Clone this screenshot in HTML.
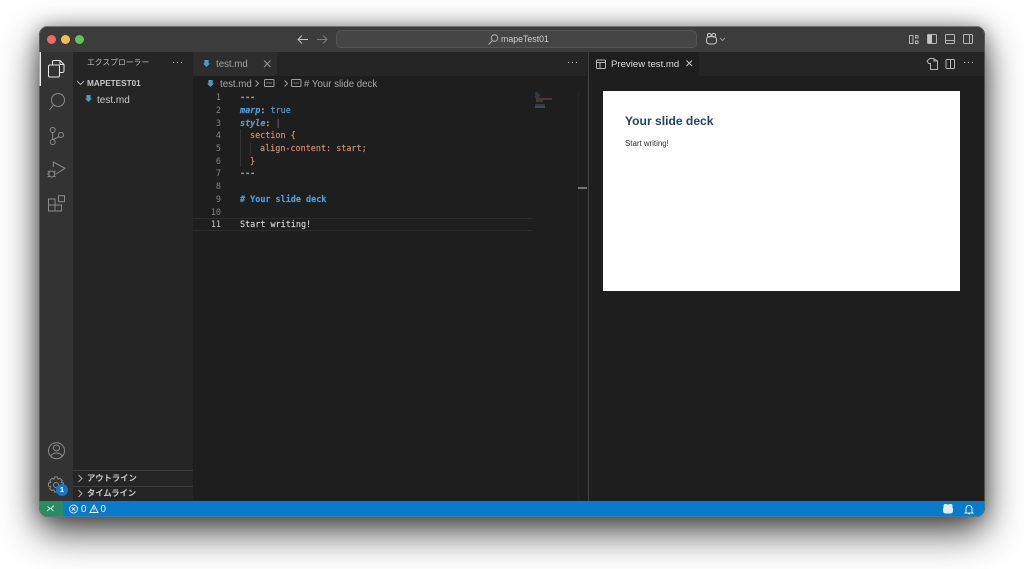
<!DOCTYPE html>
<html><head><meta charset="utf-8"><style>
html,body{margin:0;padding:0;width:1024px;height:569px;overflow:hidden;background:#fff}
body{font-family:"Liberation Sans","Noto Sans CJK JP",sans-serif;position:relative}
.a{position:absolute;white-space:nowrap}
#w{position:absolute;left:39px;top:26px;width:946px;height:491px;border-radius:9px;overflow:hidden;background:#1e1e1e;filter:blur(.25px)}
#s{position:absolute;left:39px;top:26px;width:946px;height:491px;border-radius:9px;box-shadow:0 15px 38px rgba(0,0,0,.72),0 0 18px rgba(0,0,0,.3)}
#o{position:absolute;left:39px;top:26px;width:946px;height:491px;border-radius:9px;box-sizing:border-box;border:1px solid rgba(120,120,120,.55)}
svg{position:absolute;overflow:visible;fill:none;stroke-width:1}
.m{font-family:"DejaVu Sans Mono","Liberation Mono",monospace;font-size:8.45px;line-height:13px;color:#d4d4d4;-webkit-text-stroke:.15px currentColor}
.n{font-family:"DejaVu Sans Mono","Liberation Mono",monospace;font-size:8.45px;line-height:13px;color:#858585;width:28px;text-align:right;left:193px}
</style></head><body>
<div id="s"></div>
<div id="w">
<!-- title bar -->
<div class="a" style="left:0;top:0;width:946px;height:26px;background:#3c3c3c;border-top:1px solid #6a6a6a;box-sizing:border-box"></div>
<div class="a" style="left:8px;top:9px;width:9px;height:9px;border-radius:50%;background:#ed6a5e"></div>
<div class="a" style="left:22px;top:9px;width:9px;height:9px;border-radius:50%;background:#f4bf4f"></div>
<div class="a" style="left:36px;top:9px;width:9px;height:9px;border-radius:50%;background:#61c554"></div>
<svg style="left:0;top:0" width="946" height="26" stroke="#c5c5c5">
<path d="M259 13.500h10M263 9.500l-4 4 4 4"/>
<path stroke="#7c7c7c" d="M278 13.500h10M284 9.500l4 4-4 4"/>
<g stroke="#c5c5c5"><rect x="667.500" y="10.500" width="10" height="7.500" rx="3"/><rect x="668.500" y="7.500" width="3.500" height="3.500" rx="1.500"/><rect x="673" y="7.500" width="3.500" height="3.500" rx="1.500"/></g>
<path stroke="#999" d="M681 12l2.500 2.500 2.500-2.500"/>
<g stroke="#b5b5b5"><rect x="870.500" y="9.500" width="3.500" height="8"/><rect x="876.500" y="9.500" width="2.500" height="2.500"/><rect x="876.500" y="15" width="2.500" height="2.500"/>
<rect x="888.500" y="8.500" width="9" height="9" rx="1"/><rect x="906.500" y="8.500" width="9" height="9" rx="1"/><path d="M906.500 14.500h9"/><rect x="924.500" y="8.500" width="9" height="9" rx="1"/><path d="M930.500 8.500v9"/></g>
<rect x="889" y="9" width="4" height="8" fill="#c5c5c5" stroke="none"/>
</svg>
<div class="a" style="left:297px;top:4px;width:361px;height:18px;box-sizing:border-box;background:#454545;border:1px solid #555;border-radius:5px"></div>
<svg style="left:0;top:0" width="946" height="26" stroke="#b0b0b0"><circle cx="455.500" cy="12" r="3.300"/><path d="M453 15l-3.500 3.500"/></svg>
<div class="a" style="left:462px;top:7px;font-size:8.800px;line-height:12px;color:#cfcfcf">mapeTest01</div>

<!-- activity bar -->
<div class="a" style="left:0;top:26px;width:34px;height:449px;background:#333"></div>
<div class="a" style="left:0;top:26px;width:1.500px;height:34px;background:#e8e8e8"></div>
<svg style="left:0;top:26px" width="34" height="449" stroke="#e6e6e6" stroke-width="1.100">
<rect x="9.500" y="13" width="11" height="12" rx="1.500"/><path d="M13.500 13v-3a1.500 1.500 0 0 1 1.500-1.500h6l4 4V19a1.500 1.500 0 0 1-1.500 1.500h-3M21 8.500v4h4"/>
<g stroke="#8c8c8c"><circle cx="19" cy="48" r="6.500"/><path d="M14.500 53l-4 5"/>
<circle cx="13.700" cy="78" r="2.500"/><circle cx="13.700" cy="90" r="2.500"/><circle cx="22" cy="83" r="2.500"/><path d="M13.700 80.500v7M19.800 84.500c-2 2-4.500 1.800-6 3.500"/>
<path d="M14.300 115v-5l11.700 6.300-9 5.700"/><circle cx="12.700" cy="122" r="3"/><path d="M8.700 119l2 1M8.700 125l2-1M16.700 119l-2 1M16.700 125l-2-1M8.200 122h1.500M15.700 122h1"/>
<rect x="9.500" y="147" width="6.500" height="6"/><rect x="9.500" y="153" width="6.500" height="6"/><rect x="16" y="153" width="6.500" height="6"/><rect x="19.500" y="143.700" width="6" height="6"/>
<circle cx="17.500" cy="398.700" r="8"/><circle cx="17.500" cy="396" r="3"/><path d="M11.500 404.500c1.500-3 3.500-3.500 6-3.500s4.500.5 6 3.500"/>
<circle cx="17" cy="433" r="2.500"/><path d="M15.500 425h3l.5 2.200 2-.9 2.200 2.200-.9 2 2.200.5v3l-2.200.5.9 2-2.200 2.200-2-.9-.5 2.200h-3l-.5-2.200-2 .9-2.200-2.200.9-2-2.200-.5v-3l2.200-.5-.9-2 2.200-2.200 2 .9z"/></g>
</svg>
<div class="a" style="left:17px;top:458px;width:12px;height:12px;border-radius:50%;background:#0e78cf;color:#fff;font-size:7.500px;font-weight:bold;line-height:12px;text-align:center">1</div>

<!-- sidebar -->
<div class="a" style="left:34px;top:26px;width:120px;height:449px;background:#252526"></div>
<div class="a" style="left:48px;top:31px;font-size:7.800px;line-height:12px;color:#bbb">エクスプローラー</div>
<div class="a" style="left:133px;top:29px;font-size:10px;line-height:16px;color:#c5c5c5;letter-spacing:.6px">···</div>
<svg style="left:34px;top:50px" width="120" height="14" stroke="#aaa"><path d="M4 5l3.500 3.500L11 5"/></svg>
<div class="a" style="left:48px;top:52px;font-size:8.200px;line-height:12px;font-weight:bold;color:#c8c8c8">MAPETEST01</div>
<div class="a" style="left:46px;top:69px;width:7px;height:7px;background:#519aba;clip-path:polygon(20% 0,80% 0,80% 50%,100% 50%,50% 100%,0 50%,20% 50%)"></div>
<div class="a" style="left:58px;top:68px;font-size:10px;line-height:13px;color:#ccc">test.md</div>
<div class="a" style="left:34px;top:444px;width:120px;height:1px;background:#3e3e3e"></div>
<div class="a" style="left:34px;top:460px;width:120px;height:1px;background:#3e3e3e"></div>
<svg style="left:34px;top:446px" width="20" height="30" stroke="#aaa"><path d="M5.500 3l3.500 3.500L5.500 10M5.500 18l3.500 3.500L5.500 25"/></svg>
<div class="a" style="left:48px;top:446px;font-size:8.300px;line-height:12px;font-weight:bold;color:#c8c8c8">アウトライン</div>
<div class="a" style="left:48px;top:461px;font-size:8.300px;line-height:12px;font-weight:bold;color:#c8c8c8">タイムライン</div>

<!-- editor tabs -->
<div class="a" style="left:154px;top:26px;width:394px;height:24px;background:#252526"></div>
<div class="a" style="left:154px;top:26px;width:84px;height:24px;background:#2d2d2d"></div>
<div class="a" style="left:164px;top:34px;width:7px;height:7px;background:#519aba;clip-path:polygon(20% 0,80% 0,80% 50%,100% 50%,50% 100%,0 50%,20% 50%)"></div>
<div class="a" style="left:177px;top:32px;font-size:9.700px;line-height:13px;color:#a0a0a0">test.md</div>
<svg style="left:224px;top:33px" width="10" height="10" stroke="#999"><path d="M1 1.500l6.500 6.500M7.500 1.500L1 8"/></svg>
<div class="a" style="left:528px;top:29px;font-size:10px;line-height:16px;color:#c5c5c5;letter-spacing:.6px">···</div>
<!-- breadcrumbs -->
<div class="a" style="left:168px;top:54px;width:7px;height:7px;background:#519aba;clip-path:polygon(20% 0,80% 0,80% 50%,100% 50%,50% 100%,0 50%,20% 50%)"></div>
<div class="a" style="left:181px;top:52px;font-size:9.700px;line-height:13px;color:#a8a8a8">test.md</div>
<svg style="left:154px;top:50px" width="150" height="16" stroke="#a0a0a0"><path d="M62.500 4.500l3 3-3 3M91.500 4.500l3 3-3 3"/><rect x="71.500" y="3.500" width="9.500" height="7" rx="1"/><rect x="98.500" y="3.500" width="9.500" height="7" rx="1"/><path d="M73.500 7h5.500M100.500 7h5.500" stroke-dasharray="1.300 .7"/></svg>
<div class="a" style="left:265px;top:52px;font-size:9.700px;line-height:13px;color:#a8a8a8"># Your slide deck</div>

<!-- code -->
<div class="a" style="left:154px;top:192px;width:339px;height:11px;border-top:1px solid #2d2d2d;border-bottom:1px solid #2d2d2d"></div>
<div class="a" style="left:200.500px;top:103px;width:1px;height:38px;background:#333"></div>
<div class="a" style="left:210.500px;top:116px;width:1px;height:13px;background:#333"></div>
<div class="a" style="left:0;top:0;transform:translate(-39px,-26px);width:1024px;height:569px">
<div class="a n" style="top:91px">1</div><div class="a n" style="top:104px">2</div><div class="a n" style="top:117px">3</div><div class="a n" style="top:129px">4</div><div class="a n" style="top:142px">5</div><div class="a n" style="top:155px">6</div><div class="a n" style="top:167px">7</div><div class="a n" style="top:180px">8</div><div class="a n" style="top:193px">9</div><div class="a n" style="top:206px">10</div><div class="a n" style="top:218px;color:#c6c6c6">11</div>
<div class="a m" style="left:240px;top:91px;color:#999;font-weight:bold">---</div>
<div class="a m" style="left:240px;top:104px"><b style="color:#569cd6;font-style:italic">marp</b>: <span style="color:#569cd6">true</span></div>
<div class="a m" style="left:240px;top:117px"><b style="color:#569cd6;font-style:italic">style</b>: <span style="color:#c586c0;opacity:.6">|</span></div>
<div class="a m" style="left:250px;top:129px;color:#ce9178">section {</div>
<div class="a m" style="left:260px;top:142px;color:#ce9178">align-content: start;</div>
<div class="a m" style="left:250px;top:155px;color:#ce9178">}</div>
<div class="a m" style="left:240px;top:167px;color:#999;font-weight:bold">---</div>
<div class="a m" style="left:240px;top:193px;color:#569cd6;font-weight:bold"># Your slide deck</div>
<div class="a m" style="left:240px;top:218px">Start writing!</div>
</div>
<!-- minimap -->
<svg style="left:496px;top:66px;opacity:.75" width="30" height="24" stroke-width=".7"><path stroke="#446a86" d="M0 1h3M0 3h5M0 5h4"/><path stroke="#8a6455" d="M1 7h16M1 9h7"/><path stroke="#3f6f92" d="M0 13h10"/><path stroke="#888" d="M0 15h10"/></svg>
<div class="a" style="left:539px;top:65px;width:1px;height:410px;background:#242424"></div>
<div class="a" style="left:539px;top:161px;width:9px;height:1.500px;background:#777"></div>
<div class="a" style="left:549px;top:26px;width:1px;height:449px;background:#444"></div>

<!-- preview -->
<div class="a" style="left:550px;top:26px;width:396px;height:24px;background:#252526"></div>
<div class="a" style="left:550px;top:26px;width:110px;height:24px;background:#1e1e1e"></div>
<svg style="left:549px;top:26px" width="397" height="24" stroke="#b5b5b5">
<rect x="8.500" y="8" width="9" height="8.500" rx="1"/><path d="M8.500 10.500h9M12 10.500v6"/>
<path stroke="#ccc" d="M98.500 8.500l5.500 5.500M104 8.500L98.500 14"/>
<path d="M339 9l3-2.500h3.500l4 2.500v8.500h-7v-6h-2zM346 6.500v2.500h3"/><rect x="358" y="7.500" width="8.500" height="9" rx="1"/><path d="M362.500 7.500v9"/>
</svg>
<div class="a" style="left:572px;top:32px;font-size:9.600px;line-height:13px;color:#dcdcdc">Preview test.md</div>
<div class="a" style="left:924px;top:29px;font-size:10px;line-height:16px;color:#c5c5c5;letter-spacing:.6px">···</div>
<div class="a" style="left:564px;top:65px;width:357px;height:200px;background:#fff"></div>
<div class="a" style="left:586px;top:87px;font-size:12.100px;line-height:17px;font-weight:bold;color:#224466">Your slide deck</div>
<div class="a" style="left:586px;top:111.500px;font-size:7.900px;line-height:11px;color:#333">Start writing!</div>

<!-- status bar -->
<div class="a" style="left:0;top:475px;width:946px;height:16px;background:#0a7bc9"></div>
<div class="a" style="left:0;top:475px;width:24px;height:16px;background:#2b8a63"></div>
<svg style="left:0;top:475px" width="946" height="16" stroke="#dcecf8">
<path stroke="#cfe8dc" d="M8 10l3-2.500-2.500-2M15 4.500l-3 3 2.500 2.500"/>
<circle cx="34.500" cy="8" r="4"/><path d="M32.800 6.300l3.400 3.400M36.200 6.300l-3.400 3.400"/>
<path d="M55 4l4 7.500h-8zM55 6.500v2.500M55 9.800v.7"/>
<rect x="904.500" y="6" width="9" height="6" rx="2" fill="#dcecf8"/><rect x="905" y="3.500" width="3.500" height="3.500" rx="1.200" fill="#dcecf8"/><rect x="909.500" y="3.500" width="3.500" height="3.500" rx="1.200" fill="#dcecf8"/>
<path d="M927 11V7.500a3 3 0 0 1 6 0V11l1 1h-8zM929 12.800h2"/>
</svg>
<div class="a" style="left:42px;top:477px;font-size:9.800px;line-height:13px;color:#f0f8ff">0</div>
<div class="a" style="left:61.500px;top:477px;font-size:9.800px;line-height:13px;color:#f0f8ff">0</div>
</div>
<div id="o"></div>
</body></html>
